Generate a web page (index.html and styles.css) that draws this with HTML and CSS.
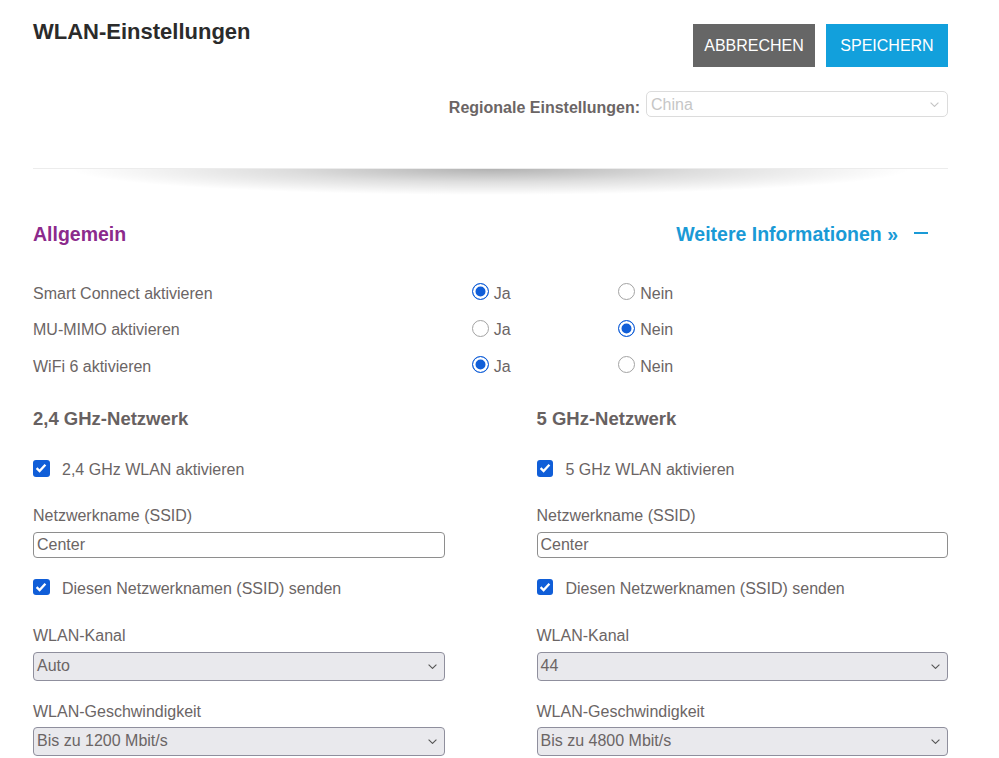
FILE: index.html
```html
<!DOCTYPE html>
<html lang="de">
<head>
<meta charset="utf-8">
<title>WLAN-Einstellungen</title>
<link rel="stylesheet" href="styles.css">
</head>
<body>
<div class="page">
  <header class="top">
    <h1 class="title">WLAN-Einstellungen</h1>
    <div class="top-right">
      <div class="actions">
        <button class="btn btn-cancel">ABBRECHEN</button>
        <button class="btn btn-save">SPEICHERN</button>
      </div>
      <div class="region">
        <span class="region-label">Regionale Einstellungen:</span>
        <div class="region-select">
          <span>China</span>
          <svg class="chev" width="9" height="5" viewBox="0 0 9 5"><polyline points="0.6,0.6 4.5,4.4 8.4,0.6" fill="none" stroke="#c4c4c4" stroke-width="1.1"/></svg>
        </div>
      </div>
    </div>
  </header>
  <div class="divider"></div>
  <div class="shadow"></div>

  <section class="general">
    <div class="sec-head">
      <h2 class="sec-title">Allgemein</h2>
      <div class="more">
        <a class="more-link" href="#">Weitere Informationen »</a>
        <span class="dash"></span>
      </div>
    </div>
    <div class="opts">
      <div class="opt-row">
        <span class="opt-label">Smart Connect aktivieren</span>
        <span class="radio-opt"><span class="radio on"></span><span>Ja</span></span>
        <span class="radio-opt"><span class="radio"></span><span>Nein</span></span>
      </div>
      <div class="opt-row">
        <span class="opt-label">MU-MIMO aktivieren</span>
        <span class="radio-opt"><span class="radio"></span><span>Ja</span></span>
        <span class="radio-opt"><span class="radio on"></span><span>Nein</span></span>
      </div>
      <div class="opt-row">
        <span class="opt-label">WiFi 6 aktivieren</span>
        <span class="radio-opt"><span class="radio on"></span><span>Ja</span></span>
        <span class="radio-opt"><span class="radio"></span><span>Nein</span></span>
      </div>
    </div>
  </section>

  <div class="bands">
    <div class="band">
      <h3 class="band-title">2,4 GHz-Netzwerk</h3>
      <div class="check-row first">
        <span class="cb"><svg width="12" height="12" viewBox="0 0 12 12"><polyline points="1.6,6.2 4.6,9.1 10.4,2.7" fill="none" stroke="#fff" stroke-width="2.3"/></svg></span>
        <span>2,4 GHz WLAN aktivieren</span>
      </div>
      <div class="field-label">Netzwerkname (SSID)</div>
      <div class="text-input">Center</div>
      <div class="check-row second">
        <span class="cb"><svg width="12" height="12" viewBox="0 0 12 12"><polyline points="1.6,6.2 4.6,9.1 10.4,2.7" fill="none" stroke="#fff" stroke-width="2.3"/></svg></span>
        <span>Diesen Netzwerknamen (SSID) senden</span>
      </div>
      <div class="field-label after-check">WLAN-Kanal</div>
      <div class="select">
        <span>Auto</span>
        <svg class="chev" width="9" height="5" viewBox="0 0 9 5"><polyline points="0.6,0.6 4.5,4.4 8.4,0.6" fill="none" stroke="#555" stroke-width="1.1"/></svg>
      </div>
      <div class="field-label after-select">WLAN-Geschwindigkeit</div>
      <div class="select last">
        <span>Bis zu 1200 Mbit/s</span>
        <svg class="chev" width="9" height="5" viewBox="0 0 9 5"><polyline points="0.6,0.6 4.5,4.4 8.4,0.6" fill="none" stroke="#555" stroke-width="1.1"/></svg>
      </div>
    </div>
    <div class="band">
      <h3 class="band-title">5 GHz-Netzwerk</h3>
      <div class="check-row first">
        <span class="cb"><svg width="12" height="12" viewBox="0 0 12 12"><polyline points="1.6,6.2 4.6,9.1 10.4,2.7" fill="none" stroke="#fff" stroke-width="2.3"/></svg></span>
        <span>5 GHz WLAN aktivieren</span>
      </div>
      <div class="field-label">Netzwerkname (SSID)</div>
      <div class="text-input">Center</div>
      <div class="check-row second">
        <span class="cb"><svg width="12" height="12" viewBox="0 0 12 12"><polyline points="1.6,6.2 4.6,9.1 10.4,2.7" fill="none" stroke="#fff" stroke-width="2.3"/></svg></span>
        <span>Diesen Netzwerknamen (SSID) senden</span>
      </div>
      <div class="field-label after-check">WLAN-Kanal</div>
      <div class="select">
        <span>44</span>
        <svg class="chev" width="9" height="5" viewBox="0 0 9 5"><polyline points="0.6,0.6 4.5,4.4 8.4,0.6" fill="none" stroke="#555" stroke-width="1.1"/></svg>
      </div>
      <div class="field-label after-select">WLAN-Geschwindigkeit</div>
      <div class="select last">
        <span>Bis zu 4800 Mbit/s</span>
        <svg class="chev" width="9" height="5" viewBox="0 0 9 5"><polyline points="0.6,0.6 4.5,4.4 8.4,0.6" fill="none" stroke="#555" stroke-width="1.1"/></svg>
      </div>
    </div>
  </div>
</div>
</body>
</html>
```

FILE: styles.css
```css
* { box-sizing: border-box; }

html, body {
  margin: 0;
  padding: 0;
  background: #ffffff;
}

body {
  font-family: "Liberation Sans", Arial, sans-serif;
  font-size: 16px;
  color: #6b6565;
}

.page {
  margin-left: 33px;
  width: 915px;
}

/* Header */
.top {
  display: flex;
  justify-content: space-between;
  align-items: flex-start;
}

.title {
  margin: 0;
  padding-top: 19px;
  font-size: 22px;
  line-height: 26px;
  font-weight: bold;
  color: #2b2b2b;
}

.top-right {
  display: flex;
  flex-direction: column;
  align-items: flex-end;
  padding-top: 24px;
}

.actions {
  display: flex;
  gap: 11px;
}

.btn {
  width: 122px;
  height: 43px;
  border: none;
  padding: 0;
  font-family: "Liberation Sans", Arial, sans-serif;
  font-size: 16px;
  line-height: 43px;
  color: #ffffff;
  cursor: pointer;
}

.btn-cancel { background: #666666; }
.btn-save { background: #12a0dc; }

.region {
  display: flex;
  align-items: flex-start;
  gap: 6px;
  margin-top: 24px;
}

.region-label {
  font-weight: bold;
  line-height: 20px;
  margin-top: 7px;
  color: #6b6565;
}

.region-select {
  width: 302px;
  height: 26px;
  border: 1px solid #dcdcdc;
  border-radius: 5px;
  display: flex;
  align-items: center;
  justify-content: space-between;
  padding: 1px 8px 0 4px;
  color: #c6c6c6;
  line-height: 20px;
}

.chev { display: block; }

.divider {
  margin-top: 50px;
  border-top: 1px solid #ececec;
}

.shadow {
  height: 30px;
  background: radial-gradient(ellipse 420px 26px at 50% 0%, rgba(0,0,0,0.30) 0%, rgba(0,0,0,0.13) 50%, rgba(0,0,0,0) 100%);
}

/* General section */
.sec-head {
  display: flex;
  justify-content: space-between;
  align-items: center;
  height: 24px;
  margin-top: 23px;
}

.sec-title {
  margin: 0;
  font-size: 19.5px;
  line-height: 24px;
  font-weight: bold;
  color: #8c2a8c;
}

.more {
  display: flex;
  align-items: center;
  gap: 16px;
  margin-right: 20px;
}

.more-link {
  font-size: 19.5px;
  line-height: 24px;
  font-weight: bold;
  color: #1a9ad6;
  text-decoration: none;
}

.dash {
  width: 14px;
  height: 2px;
  background: #1a9ad6;
  margin-bottom: 3px;
}

.opts {
  margin-top: 29.5px;
}

.opt-row {
  display: grid;
  grid-template-columns: 438.7px 146.6px 1fr;
  height: 36.5px;
  align-items: center;
  line-height: 20px;
}

.radio-opt {
  display: flex;
  align-items: center;
  gap: 5px;
}

.radio {
  width: 17px;
  height: 17px;
  border-radius: 50%;
  border: 1px solid #a3a3a3;
  background: #ffffff;
  margin-bottom: 4px;
}

.radio.on {
  border: 1.5px solid #105ed8;
  background: #105ed8;
  box-shadow: inset 0 0 0 2.5px #ffffff;
}

/* Bands */
.bands {
  display: grid;
  grid-template-columns: 411.5px 411.5px;
  column-gap: 92px;
  margin-top: 21.5px;
}

.band {
  display: flex;
  flex-direction: column;
}

.band-title {
  margin: 0;
  font-size: 18.5px;
  line-height: 24px;
  font-weight: bold;
  color: #676161;
}

.check-row {
  display: flex;
  align-items: flex-start;
  gap: 12.5px;
  line-height: 20px;
}

.check-row.first { margin-top: 29.7px; }
.check-row.second { margin-top: 20.7px; }

.cb {
  width: 16.5px;
  height: 16.5px;
  border-radius: 3px;
  background: #105ed8;
  display: flex;
  align-items: center;
  justify-content: center;
  flex: none;
}

.field-label {
  margin-top: 26px;
  line-height: 20px;
}

.field-label.after-check { margin-top: 26.7px; }
.field-label.after-select { margin-top: 20.7px; }

.text-input {
  margin-top: 6px;
  height: 26px;
  border: 1px solid #8e8e8e;
  border-radius: 4px;
  padding: 0 3px;
  line-height: 24px;
  color: #6b6565;
}

.select {
  margin-top: 6.3px;
  height: 29px;
  border: 1px solid #8f8f9d;
  border-radius: 4px;
  background: #e9e9ed;
  display: flex;
  align-items: center;
  justify-content: space-between;
  padding: 0 7px 0 3px;
  line-height: 20px;
  color: #6b6565;
}

.select.last { margin-top: 5.3px; }
```
